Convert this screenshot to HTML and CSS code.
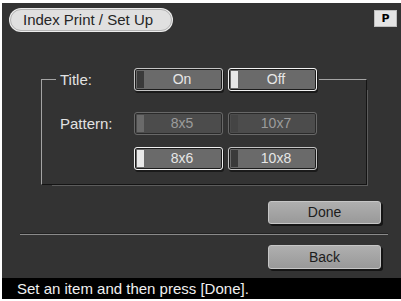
FILE: index.html
```html
<!DOCTYPE html>
<html>
<head>
<meta charset="utf-8">
<link rel="stylesheet" href="styles.css">
</head>
<body>
<div class="screen">
  <header class="top">
    <div class="pill">Index Print / Set Up</div>
    <div class="badge">P</div>
  </header>
  <fieldset class="group">
    <legend class="legend">
      <span class="label">Title:</span>
      <button class="opt"><span class="ind"></span><span class="txt">On</span></button>
      <button class="opt sel"><span class="ind"></span><span class="txt">Off</span></button>
    </legend>
    <div class="row">
      <span class="label">Pattern:</span>
      <button class="opt dis half"><span class="ind"></span><span class="txt">8x5</span></button>
      <button class="opt dis"><span class="ind"></span><span class="txt">10x7</span></button>
    </div>
    <div class="row">
      <span class="label"></span>
      <button class="opt sel"><span class="ind"></span><span class="txt">8x6</span></button>
      <button class="opt"><span class="ind"></span><span class="txt">10x8</span></button>
    </div>
  </fieldset>
  <div class="actions done-row"><button class="act">Done</button></div>
  <hr class="sep">
  <div class="actions back-row"><button class="act back">Back</button></div>
  <footer class="status">Set an item and then press [Done].</footer>
</div>
</body>
</html>
```
FILE: styles.css
```css
html, body {
  margin: 0;
  background: #ffffff;
}

.screen {
  margin: 3px 0 0 2px;
  width: 399px;
  height: 296px;
  background: #333333;
  display: flex;
  flex-direction: column;
  font-family: "Liberation Sans", Arial, sans-serif;
  overflow: hidden;
}

.top {
  display: flex;
  justify-content: space-between;
  align-items: flex-start;
  padding: 6px 4px 0 8px;
}

.pill {
  box-sizing: border-box;
  width: 162px;
  height: 22px;
  border-radius: 11px;
  background: #e0e0e0;
  border: 1px solid #b4b4b4;
  box-shadow: 0 0 0 1px #ededed;
  padding-left: 12px;
  font-size: 15px;
  line-height: 20px;
  color: #262626;
  white-space: nowrap;
}

.badge {
  box-sizing: border-box;
  margin-top: 1px;
  width: 23px;
  height: 17px;
  background: #e4e4e4;
  border: 1px solid #bdbdbd;
  font: bold 11px "DejaVu Sans", sans-serif;
  line-height: 15px;
  text-align: center;
  color: #000000;
}

.group {
  margin: 37px 0 0 39px;
  width: 326px;
  box-sizing: border-box;
  padding: 21px 0 14px 14px;
  border-style: solid;
  border-width: 1px;
  border-color: #a4a4a4 #141414 #141414 #a4a4a4;
  box-shadow: 6px 6px 0 -5px #5c5c5c;
  min-inline-size: 0;
}

.legend {
  display: flex;
  padding: 0 2px 0 4px;
}

.row {
  display: flex;
  padding-left: 4px;
}

.row + .row {
  margin-top: 12px;
}

.label {
  flex: none;
  width: 74px;
  font-size: 15px;
  line-height: 23px;
  color: #e2e2e2;
}

.opt {
  appearance: none;
  margin: 0;
  box-sizing: border-box;
  width: 89px;
  height: 23px;
  display: flex;
  padding: 2px;
  border: 1px solid #c4c4c4;
  border-radius: 3px;
  background: #6a6a6a;
  box-shadow: inset 0 0 0 1px #1c1c1c, 1px 2px 0 #1a1a1a;
  font: 14px "Liberation Sans", Arial, sans-serif;
  color: #e6e6e6;
}

.opt + .opt {
  margin-left: 5px;
}

.ind {
  flex: none;
  width: 7px;
  background: #3a3a3a;
}

.txt {
  flex: 1;
  text-align: center;
  line-height: 17px;
}

.sel {
  border-color: #f2f2f2;
}

.sel .ind {
  background: #e8e8e8;
}

.dis {
  border-color: #686868;
  background: #4c4c4c;
  color: #9c9c9c;
  box-shadow: inset 0 0 0 1px #2a2a2a;
}

.dis .ind {
  background: #444444;
}

.dis.half .ind {
  background: #6a6a6a;
}

.actions {
  display: flex;
  justify-content: flex-end;
  padding-right: 20px;
}

.done-row {
  margin-top: 16px;
}

.back-row {
  margin-top: 10px;
}

.act {
  appearance: none;
  margin: 0;
  padding: 0;
  box-sizing: border-box;
  width: 113px;
  height: 23px;
  border: 1px solid #c6c6c6;
  border-radius: 3px;
  background: linear-gradient(#afafaf, #999999);
  box-shadow: 2px 2px 0 #151515;
  font: 14px "Liberation Sans", Arial, sans-serif;
  color: #1c1c1c;
  line-height: 21px;
  text-align: center;
}

.act.back {
  height: 24px;
  line-height: 22px;
}

.sep {
  margin: 10px 13px 0 18px;
  height: 1px;
  border: 0;
  background: #8a8a8a;
  box-shadow: 0 -1px 0 #222222;
}

.status {
  margin-top: auto;
  height: 21px;
  background: #000000;
  color: #f0f0f0;
  font-size: 15px;
  line-height: 21px;
  padding-left: 15px;
  white-space: nowrap;
}
```
